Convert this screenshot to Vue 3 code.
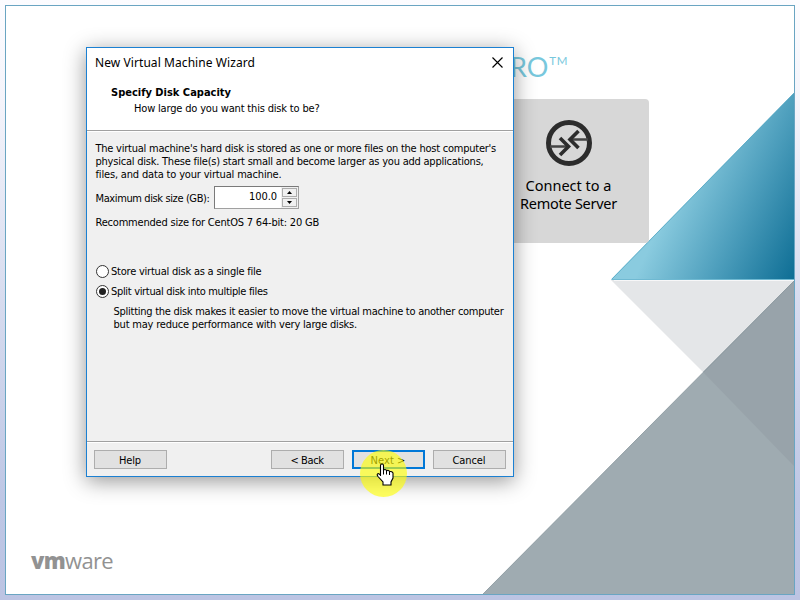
<script setup>
import { ref } from 'vue'

const layout = ref('multiple')
const size = ref('100.0')

const intro = [
  { text: "The virtual machine's hard disk is stored as one or more files on the host computer's", width: 400.5 },
  { text: 'physical disk. These file(s) start small and become larger as you add applications,', width: 388 },
  { text: 'files, and data to your virtual machine.', width: 186 }
]
const options = [
  { id: 'single', text: 'Store virtual disk as a single file', width: 150.5 },
  { id: 'multiple', text: 'Split virtual disk into multiple files', width: 156.5 }
]
const note = [
  { text: 'Splitting the disk makes it easier to move the virtual machine to another computer', width: 390 },
  { text: 'but may reduce performance with very large disks.', width: 243.5 }
]

// Tracks a line of text so that it fills the given width.
const vFit = {
  mounted(el, { value }) {
    const natural = el.getBoundingClientRect().width
    el.style.letterSpacing = (value - natural) / el.textContent.length + 'px'
  }
}
</script>

<template>
  <div class="desktop">
    <main class="window">
      <svg class="facets" width="788" height="588" viewBox="6 6 788 588">
        <defs>
          <linearGradient id="teal" gradientUnits="userSpaceOnUse" x1="655" y1="235" x2="794" y2="300">
            <stop offset="0" stop-color="#8acbdf" />
            <stop offset="0.45" stop-color="#4e9fbd" />
            <stop offset="1" stop-color="#066890" />
          </linearGradient>
        </defs>
        <path d="M611 280H794V463Z" fill="#e4e6e8" />
        <path d="M794 281V594H483Z" fill="#9fabb1" />
        <path d="M703 372L794 281V466Z" fill="#98a3aa" />
        <path d="M611 279.500L794 93V279.500Z" fill="url(#teal)" />
        <path d="M611.500 279.500L794 93" stroke="#4ba3c0" stroke-width="1" opacity=".7" />
        <path d="M612 279.500H794" stroke="#6fb9d2" />
        <path d="M614 280.500H794" stroke="#f7f7f8" />
        <path d="M483 594L794 281" stroke="#87949b" stroke-width=".8" />
      </svg>

      <div class="product">RO<span>TM</span></div>

      <section class="tile">
        <svg width="46" height="46" viewBox="0 0 46 46" fill="none" stroke="#2c2c2c">
          <circle cx="23" cy="23" r="20.500" stroke-width="5" />
          <path d="M4 26.500H22M24 19.500H42" stroke-width="2.400" stroke="#444" />
          <path d="M14 18L22.500 26.500L14 35M32.500 11L24 19.500L32.500 28" stroke-width="3.600" />
        </svg>
        <p><span v-fit="86">Connect to a</span></p>
        <p><span v-fit="97">Remote Server</span></p>
      </section>

      <div class="brand"><b>vm</b><span>ware</span></div>
    </main>

    <div class="dialog">
      <header>
        <div class="titlebar">
          <span v-fit="160">New Virtual Machine Wizard</span>
          <svg width="11" height="11" viewBox="0 0 11 11"><path d="M.5 .5L10.500 10.500M10.500 .5L.5 10.500" stroke="#000" stroke-width="1.150" /></svg>
        </div>
        <h1><span v-fit="120">Specify Disk Capacity</span></h1>
        <p class="sub"><span v-fit="185.5">How large do you want this disk to be?</span></p>
      </header>

      <div class="body">
        <p v-for="l in intro" :key="l.text"><span v-fit="l.width">{{ l.text }}</span></p>
        <div class="field">
          <span class="label" v-fit="114">Maximum disk size (GB):</span>
          <div class="spinner">
            <span class="value"><span v-fit="28">{{ size }}</span></span>
            <div class="steps">
              <i><svg width="5" height="3" viewBox="0 0 5 3"><path d="M0 3L2.500 0L5 3Z" /></svg></i>
              <i><svg width="5" height="3" viewBox="0 0 5 3"><path d="M0 0L2.500 3L5 0Z" /></svg></i>
            </div>
          </div>
        </div>
        <p class="hint"><span v-fit="223.5">Recommended size for CentOS 7 64-bit: 20 GB</span></p>

        <div class="options">
          <div v-for="o in options" :key="o.id" class="option" @click="layout = o.id">
            <svg width="13" height="13" viewBox="0 0 13 13">
              <circle cx="6.500" cy="6.500" r="6" fill="#fff" stroke="#333" />
              <circle v-if="layout === o.id" cx="6.500" cy="6.500" r="3.500" fill="#222" />
            </svg>
            <span v-fit="o.width">{{ o.text }}</span>
          </div>
        </div>
        <div class="note">
          <p v-for="l in note" :key="l.text"><span v-fit="l.width">{{ l.text }}</span></p>
        </div>
      </div>

      <footer>
        <button class="help"><span v-fit="22">Help</span></button>
        <button><span v-fit="33">&lt; Back</span></button>
        <button class="primary"><span v-fit="35">Next &gt;</span></button>
        <button><span v-fit="33">Cancel</span></button>
      </footer>
    </div>

    <div class="halo"></div>
    <svg class="hand" width="19" height="24" viewBox="0 0 19 24">
      <path d="M4.500 13V2.500Q4.500 1 6 1T7.500 2.500V7.500Q7.600 6.500 9 6.500T10.500 8Q10.700 7.200 12 7.200T13.500 9Q13.700 8.300 15 8.500T17 10V15L15 19V22H7V19L2 13.500Q.7 12 1.500 11T4.500 12Z" fill="#fff" stroke="#000" stroke-width="1.100" />
      <path d="M7.500 7V11.500M10.500 8V11.500M13.500 9V12" stroke="#000" />
    </svg>
  </div>
</template>

<style>
body { overflow: hidden; }
</style>

<style scoped>
* { box-sizing: border-box; margin: 0; }
.desktop {
  position: relative;
  width: 800px;
  height: 600px;
  padding: 5px;
  background: linear-gradient(#fcfcff 0%, #f4f4fb 17%, #d7dcef 50%, #bec7e5 83%, #bcc4e3 100%);
  font: 11px/13px "DejaVu Sans Condensed", "DejaVu Sans", sans-serif;
  font-stretch: condensed;
  color: #000;
}
span { white-space: nowrap; }
.window {
  position: relative;
  width: 790px;
  height: 590px;
  border: 1px solid #6aa5c2;
  background: #fff;
}
.facets { position: absolute; left: 0; top: 0; }
.product {
  position: absolute;
  left: 504px;
  top: 45px;
  display: flex;
  font: 400 27px/32px Lato, sans-serif;
  color: #78c8dd;
}
.product span {
  margin-left: 1px;
  font-size: 11.5px;
  line-height: 20px;
  letter-spacing: .6px;
}
.tile {
  position: absolute;
  left: 482px;
  top: 93px;
  width: 161px;
  height: 144px;
  border-radius: 4px;
  padding: 21px 0 0;
  background: #d7d7d7;
  display: flex;
  flex-direction: column;
  align-items: center;
  font: 14.5px/18px "Noto Sans", sans-serif;
}
.tile svg { margin-bottom: 10px; }
.tile p { height: 18px; }
.tile span { display: block; height: 18px; }
.brand {
  position: absolute;
  left: 25px;
  top: 542px;
  font: 22px/24px "Open Sans", sans-serif;
  letter-spacing: -.7px;
  color: #929292;
}
.brand b { font-weight: 800; }
.dialog {
  position: absolute;
  left: 86px;
  top: 47px;
  width: 428px;
  height: 430px;
  display: flex;
  flex-direction: column;
  border: 1px solid #1b80d2;
  background: #f0f0f0;
  box-shadow: 0 4px 20px rgba(0, 0, 0, .42);
}
header {
  height: 83px;
  background: #fff;
  border-bottom: 1px solid #a0a0a0;
}
.titlebar {
  display: flex;
  justify-content: space-between;
  align-items: center;
  height: 29px;
  padding: 0 10px 0 8px;
  font: 12px/18px "Noto Sans", sans-serif;
}
h1 { padding: 9px 0 0 24px; font-size: 11px; line-height: 13px; }
.sub { padding: 3px 0 0 47px; }
.body {
  flex: 1;
  padding: 10px 0 0 8.5px;
  border-top: 1px solid #fff;
  border-bottom: 1px solid #a0a0a0;
}
.field { display: flex; align-items: center; gap: 4.5px; height: 23px; margin-top: 5px; }
.label { padding-top: 2px; }
.spinner {
  display: flex;
  width: 85px;
  height: 23px;
  border: 1px solid #a0a0a0;
  border-top-color: #7a7a7a;
  border-left-color: #7a7a7a;
  background: #fff;
}
.value { flex: 1; padding: 3px 4px 0 0; text-align: right; }
.steps { width: 17px; padding: 1px; display: grid; grid-template-rows: 9px 9px; gap: 1px; background: #f0f0f0; }
.steps i { display: flex; align-items: center; justify-content: center; border: 1px solid #adadad; background: #f0f0f0; }
.hint { margin-top: 7px; }
.options { display: grid; gap: 7px; padding: 36px 0 0 .5px; }
.option { display: flex; align-items: center; gap: 2px; height: 13px; }
.note { padding: 7px 0 0 18px; }
footer { display: flex; gap: 8px; height: 34px; padding: 7px 7px 0; border-top: 1px solid #fff; }
button {
  width: 73px;
  height: 19px;
  padding: 1px 1px 0 0;
  border: 1px solid #adadad;
  background: #e1e1e1;
  color: #000;
  font: inherit;
  line-height: 17px;
}
.help { margin-right: 96px; }
.primary { border: 2px solid #0078d7; line-height: 15px; }
.halo {
  position: absolute;
  left: 360px;
  top: 450px;
  width: 47px;
  height: 47px;
  border-radius: 50%;
  background: rgba(255, 255, 0, .62);
}
.hand { position: absolute; left: 376px; top: 463px; }
</style>
